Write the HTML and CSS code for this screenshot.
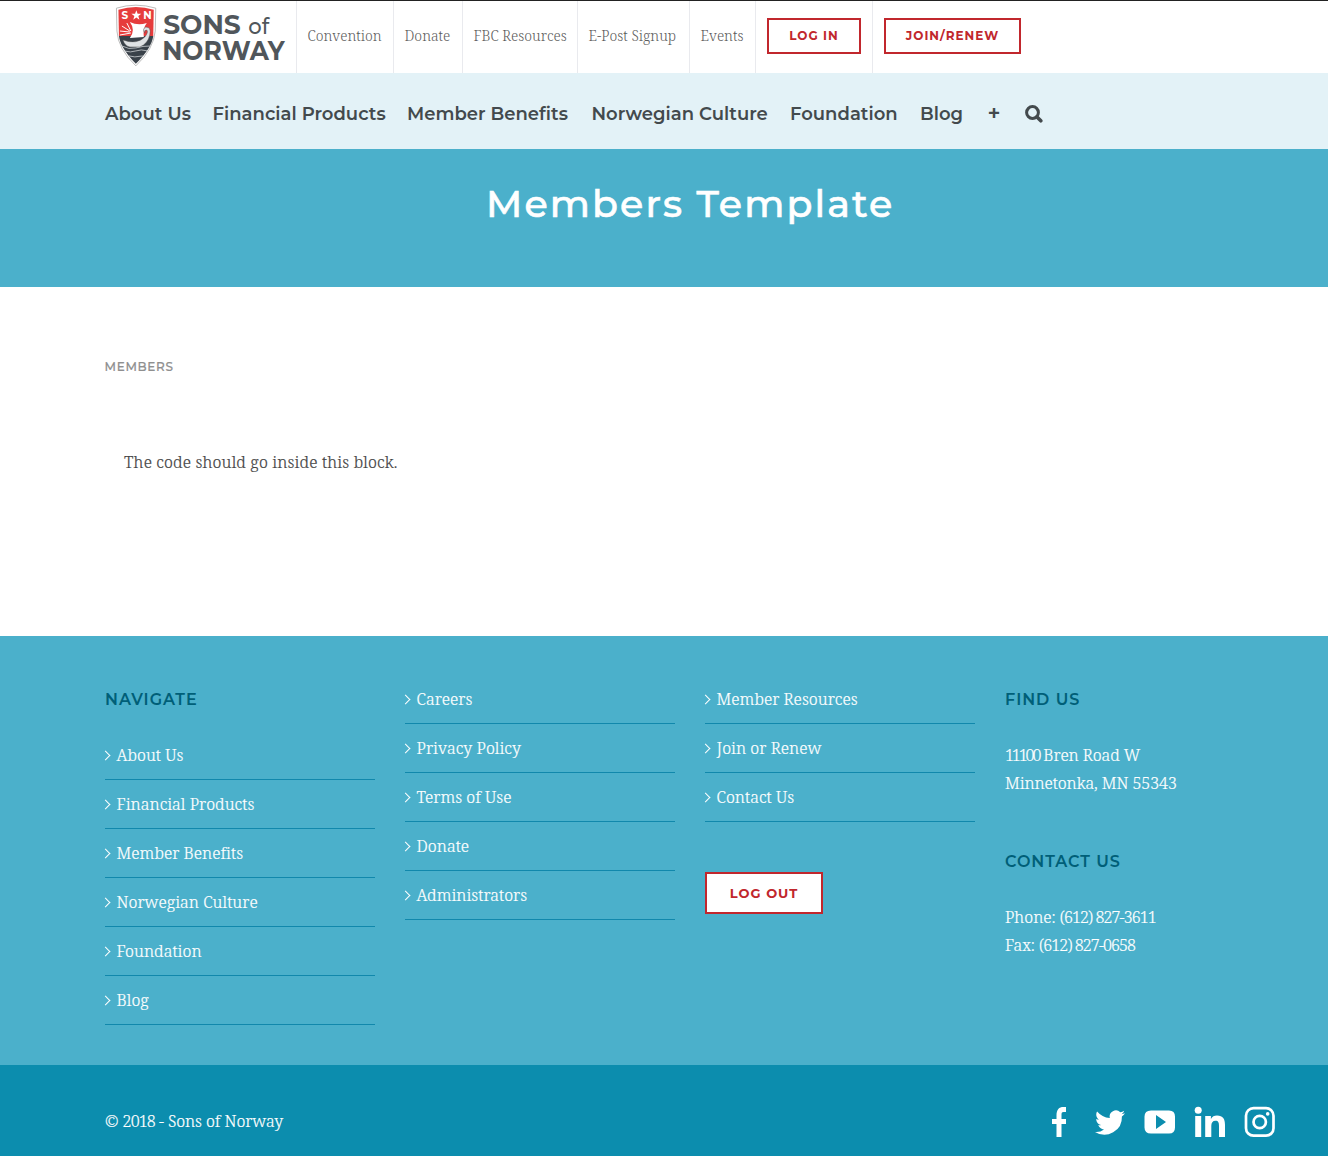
FILE: index.html
```html
<!DOCTYPE html>
<html lang="en">
<head>
<meta charset="utf-8">
<title>Members Template - Sons of Norway</title>
<link rel="stylesheet" href="styles.css">
</head>
<body>
<header>
  <nav class="topbar">
    <a class="logo" href="#">
      <svg width="192" height="72" viewBox="0 0 192 72" role="img" aria-label="Sons of Norway">
        <path d="M11.500 7Q31 1 51 7L50.500 30Q49 48 31 65Q13 48 12 30Z" fill="#fff" stroke="#aaa" stroke-width=".8"/>
        <path d="M13.500 8.500Q31 3 49 8.500L48.500 35H14Z" fill="#e63c3c"/>
        <path d="M14 35H48.500Q47 47 31 63Q15.500 47 14 35Z" fill="#394149"/>
        <path d="M15 34L26 32M15 30L25 31M17 25L25 30M22 22L26 30" stroke="#fff" stroke-width="1"/>
        <path d="M25 21Q33 25 42 22Q38 27 39 36L25 37Q31 29 25 21Z" fill="#fff"/>
        <path d="M18 39Q32 44 40 36Q44 31 42 29Q39 29 40 32Q37 28 41 26Q47 26 45 34Q43 43 35 46H25Q20 45 18 39Z" fill="#dfe2e4" stroke="#555" stroke-width=".5"/>
        <path d="M17 45Q24 49 31 47T46 45M19 50Q26 52 31 50T43 50M24 55Q29 57 38 55" fill="none" stroke="#ccd0d3" stroke-width=".8"/>
        <path d="M31.500 9L32.800 12.700H36.500L33.500 15L34.600 18.700L31.500 16.500L28.400 18.700L29.500 15L26.500 12.700H30.200Z" fill="#fff"/>
        <text class="shield-letter" x="16.500" y="17.500">S</text>
        <text class="shield-letter" x="38.500" y="17.500">N</text>
        <text class="logo-bold" x="58.500" y="32.500" textLength="78" lengthAdjust="spacingAndGlyphs">SONS</text>
        <text class="logo-light" x="144" y="32.500" textLength="21" lengthAdjust="spacingAndGlyphs">of</text>
        <text class="logo-bold" x="57.500" y="59" textLength="123" lengthAdjust="spacingAndGlyphs">NORWAY</text>
      </svg>
    </a>
    <a href="#">Convention</a>
    <a href="#">Donate</a>
    <a href="#">FBC Resources</a>
    <a href="#">E-Post Signup</a>
    <a href="#">Events</a>
    <a href="#"><span class="button">LOG IN</span></a>
    <a href="#"><span class="button button-join">JOIN/RENEW</span></a>
  </nav>
  <nav class="mainnav">
    <a href="#">About Us</a>
    <a href="#">Financial Products</a>
    <a href="#">Member Benefits</a>
    <a href="#">Norwegian Culture</a>
    <a href="#">Foundation</a>
    <a href="#">Blog</a>
    <a href="#" class="plus">+</a>
    <a href="#" aria-label="Search"><svg width="18" height="18" viewBox="0 0 18 18" fill="none" stroke="#434a4d"><circle cx="7.500" cy="7.500" r="5.900" stroke-width="3"/><path d="M12 12l3.800 3.800" stroke-width="3.600" stroke-linecap="round"/></svg></a>
  </nav>
</header>
<section class="hero"><h1>Members Template</h1></section>
<main>
  <p class="crumb">MEMBERS</p>
  <p class="copy">The code should go inside this block.</p>
</main>
<footer>
  <div class="widgets">
    <section>
      <h2>NAVIGATE</h2>
      <ul>
        <li><a href="#">About Us</a></li>
        <li><a href="#">Financial Products</a></li>
        <li><a href="#">Member Benefits</a></li>
        <li><a href="#">Norwegian Culture</a></li>
        <li><a href="#">Foundation</a></li>
        <li><a href="#">Blog</a></li>
      </ul>
    </section>
    <section>
      <ul>
        <li><a href="#">Careers</a></li>
        <li><a href="#">Privacy Policy</a></li>
        <li><a href="#">Terms of Use</a></li>
        <li><a href="#">Donate</a></li>
        <li><a href="#">Administrators</a></li>
      </ul>
    </section>
    <section>
      <ul>
        <li><a href="#">Member Resources</a></li>
        <li><a href="#">Join or Renew</a></li>
        <li><a href="#">Contact Us</a></li>
      </ul>
      <a class="button button-logout" href="#">LOG OUT</a>
    </section>
    <section>
      <h2>FIND US</h2>
      <p class="address"><span class="house">11100</span> Bren Road W<br>Minnetonka, MN 55343</p>
      <h2>CONTACT US</h2>
      <p>Phone: <span class="number">(612) 827-3611</span><br>Fax: <span class="number">(612) 827-0658</span></p>
    </section>
  </div>
  <div class="bottom">
    <p>© <span class="number">2018</span> - Sons of Norway</p>
    <div class="social">
      <a href="#" aria-label="Facebook"><svg viewBox="0 0 32 32"><path d="M12.500 31V18H8v-5h4.500V9.500C12.500 3.500 15 1 19.500 1H22v5h-2.500c-1.500 0-2 .8-2 2.500V13H22v5h-4.500v13z"/></svg></a>
      <a href="#" aria-label="Twitter"><svg viewBox="0 0 32 32"><path d="M31 7.200c-1.100.5-2.300.8-3.500 1 1.300-.8 2.200-1.900 2.700-3.400-1.200.7-2.500 1.200-3.900 1.500A6.200 6.200 0 0 0 15.800 12C10.700 11.700 6.200 9.300 3.100 5.500c-1.700 2.900-.7 6.400 1.900 8.200-1 0-1.900-.3-2.800-.8 0 3 2.100 5.500 4.900 6.100-.9.200-1.900.3-2.800.1.800 2.500 3 4.200 5.700 4.300A12.400 12.400 0 0 1 1 25.900 17.500 17.500 0 0 0 27.900 10.400c1.200-.9 2.300-2 3.100-3.200z"/></svg></a>
      <a href="#" aria-label="YouTube"><svg viewBox="0 0 32 32"><path fill-rule="evenodd" d="M7 4.500H25Q31 4.500 31 10.500V21.500Q31 27.500 25 27.500H7Q.500 27.500.500 21.500V10.500Q.500 4.500 7 4.500ZM12 9V23L22 16Z"/></svg></a>
      <a href="#" aria-label="LinkedIn"><svg viewBox="0 0 32 32"><circle cx="4.200" cy="4.200" r="3.500"/><path d="M1.200 10h6v21h-6zM11.200 10h5.700v2.900c1.200-2.200 3.300-3.400 6.100-3.400 6 0 8 3.400 8 9.500v12h-6V20c0-3.300-.6-5.300-3.500-5.300s-4.200 2-4.200 5.300v11h-6.100z"/></svg></a>
      <a href="#" aria-label="Instagram"><svg viewBox="0 0 32 32" fill="none" stroke="#fff" stroke-width="2.700"><rect x="2" y="2.200" width="27.500" height="27.500" rx="7.500"/><circle cx="15.700" cy="16" r="6.200"/><circle cx="23.700" cy="7.900" r="1.800" fill="#fff" stroke="none"/></svg></a>
    </div>
  </div>
</footer>
</body>
</html>
```
FILE: styles.css
```css
* { box-sizing: border-box; }
body {
  margin: 0;
  font: 300 16px/28px "Noto Serif", "DejaVu Serif Condensed", "DejaVu Serif", serif;
  font-stretch: 87.5%;
  color: #444;
  background: #fff;
}
a { color: inherit; text-decoration: none; }
h1, h2, p, ul { margin: 0; padding: 0; }
ul { list-style: none; }
svg { display: block; }
p, li { -webkit-text-stroke: .2px; }

.topbar {
  display: grid;
  grid-template-columns: 192px 97px 69px 115px 112px 66px 117px 149px;
  height: 72px;
  margin-bottom: 1px;
  padding-left: 105px;
  border-top: 1px solid #222;
  font-size: 14px;
  color: #5c5c5c;
}
.topbar a {
  display: flex;
  align-items: center;
  padding: 0 0 2px 10.500px;
  border-right: 1px solid #e9eaee;
  white-space: nowrap;
}
.topbar .logo { padding: 0; }
.topbar a:last-child { border: 0; }
.logo-bold, .logo-light, .shield-letter { font-family: "Montserrat", "Inter", sans-serif; }
.logo-bold { font-size: 27px; font-weight: 700; fill: #50565b; }
.logo-light { font-size: 22px; font-weight: 500; fill: #50565b; }
.shield-letter { font-size: 10.500px; font-weight: 700; fill: #fff; }

.button {
  display: flex;
  align-items: center;
  justify-content: center;
  width: 94px;
  height: 36px;
  border: 2px solid #c1272d;
  background: #fff;
  color: #c1272d;
  font: 700 12px/1 "Montserrat", "Inter", sans-serif;
  letter-spacing: 1px;
}
.topbar .button { margin-left: .5px; }
.button-join { width: 137px; }
.button-logout { width: 118px; height: 42px; margin-top: 50px; font-size: 13px; }

.mainnav {
  display: grid;
  grid-template-columns: 107.500px 194.500px 184.500px 198.500px 130px 67.500px 37.500px 20px;
  align-items: center;
  height: 76px;
  padding: 5px 0 0 105px;
  background: #e3f2f7;
  color: #434a4d;
  font: 600 18px/1 "Montserrat", "Inter", sans-serif;
  letter-spacing: .02px;
  white-space: nowrap;
}
.plus { font-size: 22px; line-height: 18px; }

.hero { height: 138px; padding-top: 32px; background: #4bb0cb; color: #fff; }
.hero h1 {
  font: 500 38px/46px "Montserrat", "Inter", sans-serif;
  letter-spacing: 2.100px;
  -webkit-text-stroke: .6px;
  padding-left: 486px;
  white-space: nowrap;
}
main { height: 349px; padding: 66px 105px 0 104.500px; }
.crumb { font: 500 12px/27px "Montserrat", "Inter", sans-serif; letter-spacing: .7px; color: #8f8f8f; }
.copy { margin: 68px 0 0 19.500px; letter-spacing: .16px; }

.widgets {
  display: grid;
  grid-template-columns: repeat(4, 270px);
  gap: 30px;
  height: 429px;
  padding: 49px 0 0 105px;
  background: #4bb0cb;
  color: #fff;
}
h2 {
  margin-bottom: 27px;
  padding-top: 1px;
  color: #005f78;
  font: 600 16px/28px "Montserrat", "Inter", sans-serif;
  letter-spacing: .95px;
}
li { height: 49px; padding-top: 10px; border-bottom: 1px solid #1188ac; }
li:first-child { height: 39px; padding-top: 0; }
li a { display: flex; align-items: center; letter-spacing: .05px; }
li a::before {
  content: "";
  width: 6px;
  height: 6px;
  margin: 1px 7.500px 0 -3px;
  border: solid #fff;
  border-width: 1.500px 1.500px 0 0;
  transform: rotate(45deg);
}
.address { margin-bottom: 50px; letter-spacing: -.07px; }
.house { letter-spacing: -2.100px; }
.number { letter-spacing: -.9px; }
.bottom {
  display: flex;
  justify-content: space-between;
  height: 91px;
  padding: 42px 52px 0 105px;
  background: #0c8dae;
  color: #fff;
}
.bottom p { letter-spacing: -.05px; }
.social { display: flex; gap: 18px; margin-top: -1px; }
.social svg { width: 32px; height: 32px; }
.social svg:not([fill]) { fill: #fff; }
```
